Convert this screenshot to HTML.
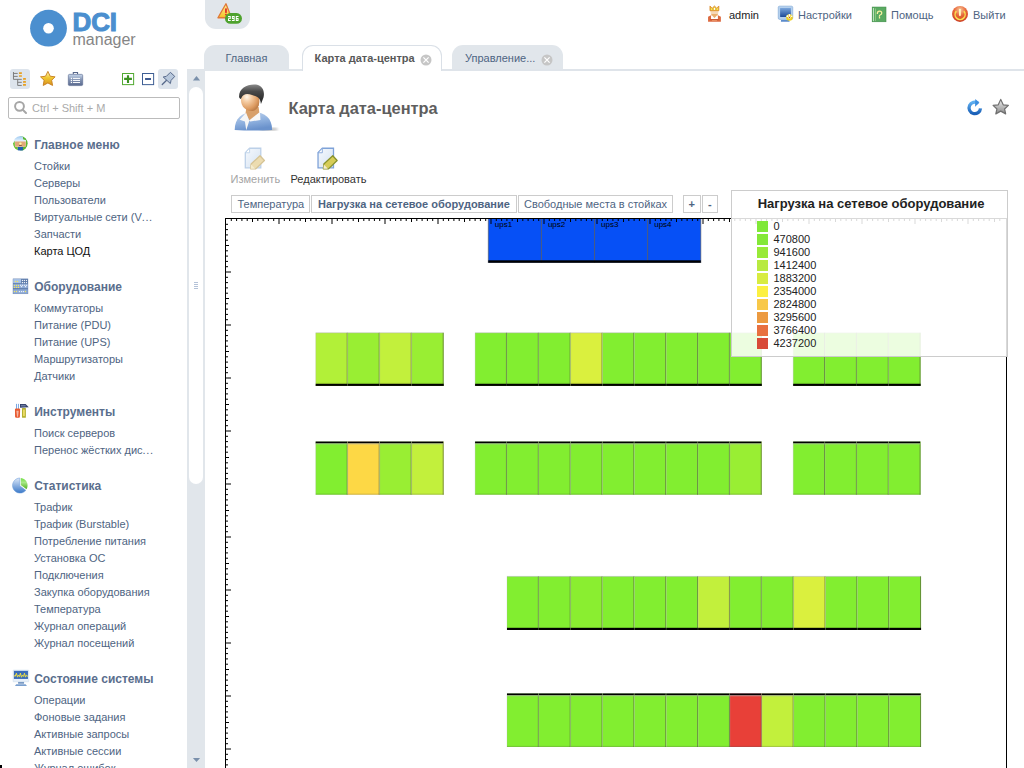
<!DOCTYPE html><html><head><meta charset="utf-8"><style>
*{margin:0;padding:0;box-sizing:border-box}
html,body{width:1024px;height:768px;overflow:hidden;background:#fff;font-family:"Liberation Sans",sans-serif;font-size:11px;color:#333}
.a{position:absolute}
.t{position:absolute;white-space:nowrap}
svg{position:absolute;overflow:visible}
</style></head><body>
<svg style="left:29px;top:9px" width="40" height="40"><circle cx="19.5" cy="19.2" r="18.4" fill="#4b8fcf"/><circle cx="19.5" cy="19.2" r="5.3" fill="#fff"/></svg>
<div class="t" style="left:72.6px;top:5.00px;font-size:26px;line-height:34px;color:#4b8fcf;font-weight:bold;letter-spacing:-0.2px;-webkit-text-stroke:1px #4b8fcf">DCI</div>
<div class="t" style="left:72.5px;top:28.50px;font-size:16px;line-height:21px;color:#858585;font-weight:normal;">manager</div>
<div class="a" style="left:205px;top:0;width:45px;height:29px;background:#e1e6eb;border-radius:0 0 11px 11px"></div>
<div class="t" style="left:729px;top:8.00px;font-size:11px;line-height:14px;color:#222;font-weight:normal;">admin</div>
<div class="t" style="left:798px;top:8.00px;font-size:11px;line-height:14px;color:#4e6482;font-weight:normal;">Настройки</div>
<div class="t" style="left:891px;top:8.00px;font-size:11px;line-height:14px;color:#4e6482;font-weight:normal;">Помощь</div>
<div class="t" style="left:973px;top:8.00px;font-size:11px;line-height:14px;color:#4e6482;font-weight:normal;">Выйти</div>
<div class="a" style="left:204px;top:45px;width:85px;height:26px;background:#e1e6eb;border-radius:11px 11px 0 0"></div>
<div class="t" style="left:225.5px;top:51.00px;font-size:11px;line-height:14px;color:#4e6482;font-weight:normal;">Главная</div>
<div class="a" style="left:302px;top:45px;width:140px;height:26px;background:#fff;border:1px solid #dae0e7;border-bottom:none;border-radius:11px 11px 0 0"></div>
<div class="t" style="left:314.6px;top:51.00px;font-size:11px;line-height:14px;color:#585858;font-weight:bold;">Карта дата-центра</div>
<div class="a" style="left:452px;top:45px;width:111px;height:26px;background:#e1e6eb;border-radius:11px 11px 0 0"></div>
<div class="t" style="left:465px;top:51.00px;font-size:11px;line-height:14px;color:#4e6482;font-weight:normal;">Управление...</div>
<div class="a" style="left:442px;top:69px;width:582px;height:2px;background:#dfe4ea"></div>
<div class="a" style="left:187px;top:69px;width:115px;height:2px;background:#e1e6eb"></div>
<div class="a" style="left:10px;top:69px;width:20px;height:20px;background:#dde4ec;border-radius:3px"></div>
<div class="a" style="left:158px;top:69px;width:20px;height:20px;background:#dde4ec;border-radius:3px"></div>
<div class="a" style="left:8px;top:97px;width:172px;height:22px;border:1px solid #bbb;border-radius:2px"></div>
<div class="t" style="left:32px;top:101.00px;font-size:11px;line-height:14px;color:#aaa;font-weight:normal;">Ctrl + Shift + M</div>
<div class="a" style="left:187px;top:69px;width:18px;height:699px;background:#e1e6eb"></div>
<div class="a" style="left:189px;top:87px;width:14px;height:397px;background:#fff;border-radius:7px"></div>
<div class="t" style="left:34.2px;top:137.00px;font-size:12px;line-height:16px;color:#5a6e8d;font-weight:bold;">Главное меню</div>
<div class="t" style="left:34.0px;top:159.00px;font-size:11px;line-height:14px;color:#4e6482;font-weight:normal;">Стойки</div>
<div class="t" style="left:34.0px;top:176.00px;font-size:11px;line-height:14px;color:#4e6482;font-weight:normal;">Серверы</div>
<div class="t" style="left:34.0px;top:193.00px;font-size:11px;line-height:14px;color:#4e6482;font-weight:normal;">Пользователи</div>
<div class="t" style="left:34.0px;top:210.00px;font-size:11px;line-height:14px;color:#4e6482;font-weight:normal;">Виртуальные сети (V<span style="letter-spacing:0.6px">...</span></div>
<div class="t" style="left:34.0px;top:227.00px;font-size:11px;line-height:14px;color:#4e6482;font-weight:normal;">Запчасти</div>
<div class="t" style="left:34.0px;top:244.00px;font-size:11px;line-height:14px;color:#111;font-weight:normal;">Карта ЦОД</div>
<div class="t" style="left:34.2px;top:279.00px;font-size:12px;line-height:16px;color:#5a6e8d;font-weight:bold;">Оборудование</div>
<div class="t" style="left:34.0px;top:301.00px;font-size:11px;line-height:14px;color:#4e6482;font-weight:normal;">Коммутаторы</div>
<div class="t" style="left:34.0px;top:318.00px;font-size:11px;line-height:14px;color:#4e6482;font-weight:normal;">Питание (PDU)</div>
<div class="t" style="left:34.0px;top:335.00px;font-size:11px;line-height:14px;color:#4e6482;font-weight:normal;">Питание (UPS)</div>
<div class="t" style="left:34.0px;top:352.00px;font-size:11px;line-height:14px;color:#4e6482;font-weight:normal;">Маршрутизаторы</div>
<div class="t" style="left:34.0px;top:369.00px;font-size:11px;line-height:14px;color:#4e6482;font-weight:normal;">Датчики</div>
<div class="t" style="left:34.2px;top:404.00px;font-size:12px;line-height:16px;color:#5a6e8d;font-weight:bold;">Инструменты</div>
<div class="t" style="left:34.0px;top:426.00px;font-size:11px;line-height:14px;color:#4e6482;font-weight:normal;">Поиск серверов</div>
<div class="t" style="left:34.0px;top:443.00px;font-size:11px;line-height:14px;color:#4e6482;font-weight:normal;">Перенос жёстких дис<span style="letter-spacing:0.6px">...</span></div>
<div class="t" style="left:34.2px;top:478.00px;font-size:12px;line-height:16px;color:#5a6e8d;font-weight:bold;">Статистика</div>
<div class="t" style="left:34.0px;top:500.00px;font-size:11px;line-height:14px;color:#4e6482;font-weight:normal;">Трафик</div>
<div class="t" style="left:34.0px;top:517.00px;font-size:11px;line-height:14px;color:#4e6482;font-weight:normal;">Трафик (Burstable)</div>
<div class="t" style="left:34.0px;top:534.00px;font-size:11px;line-height:14px;color:#4e6482;font-weight:normal;">Потребление питания</div>
<div class="t" style="left:34.0px;top:551.00px;font-size:11px;line-height:14px;color:#4e6482;font-weight:normal;">Установка ОС</div>
<div class="t" style="left:34.0px;top:568.00px;font-size:11px;line-height:14px;color:#4e6482;font-weight:normal;">Подключения</div>
<div class="t" style="left:34.0px;top:585.00px;font-size:11px;line-height:14px;color:#4e6482;font-weight:normal;">Закупка оборудования</div>
<div class="t" style="left:34.0px;top:602.00px;font-size:11px;line-height:14px;color:#4e6482;font-weight:normal;">Температура</div>
<div class="t" style="left:34.0px;top:619.00px;font-size:11px;line-height:14px;color:#4e6482;font-weight:normal;">Журнал операций</div>
<div class="t" style="left:34.0px;top:636.00px;font-size:11px;line-height:14px;color:#4e6482;font-weight:normal;">Журнал посещений</div>
<div class="t" style="left:34.2px;top:671.00px;font-size:12px;line-height:16px;color:#5a6e8d;font-weight:bold;">Состояние системы</div>
<div class="t" style="left:34.0px;top:693.00px;font-size:11px;line-height:14px;color:#4e6482;font-weight:normal;">Операции</div>
<div class="t" style="left:34.0px;top:710.00px;font-size:11px;line-height:14px;color:#4e6482;font-weight:normal;">Фоновые задания</div>
<div class="t" style="left:34.0px;top:727.00px;font-size:11px;line-height:14px;color:#4e6482;font-weight:normal;">Активные запросы</div>
<div class="t" style="left:34.0px;top:744.00px;font-size:11px;line-height:14px;color:#4e6482;font-weight:normal;">Активные сессии</div>
<div class="t" style="left:34.0px;top:761.00px;font-size:11px;line-height:14px;color:#4e6482;font-weight:normal;">Журнал ошибок</div>
<div class="t" style="left:288.5px;top:97.90px;font-size:16.4px;line-height:21px;color:#5e5e5e;font-weight:bold;">Карта дата-центра</div>
<div class="t" style="left:230.5px;top:171.50px;font-size:11px;line-height:14px;color:#a4a4a4;font-weight:normal;">Изменить</div>
<div class="t" style="left:290.5px;top:171.50px;font-size:11px;line-height:14px;color:#333;font-weight:normal;">Редактировать</div>
<div class="t" style="left:0px;top:-11.00px;font-size:11px;line-height:14px;color:#4e6482;font-weight:normal;"></div>
<div class="a" style="left:231px;top:195px;width:79px;height:18px;border:1px solid #ccc;background:#fff"></div>
<div class="a" style="left:311px;top:195px;width:206px;height:18px;border:1px solid #ccc;background:#fff"></div>
<div class="a" style="left:518px;top:195px;width:155px;height:18px;border:1px solid #ccc;background:#fff"></div>
<div class="a" style="left:683px;top:195px;width:18px;height:18px;border:1px solid #ccc;background:#fff"></div>
<div class="a" style="left:702px;top:195px;width:16px;height:18px;border:1px solid #ccc;background:#fff"></div>
<div class="t" style="left:237.5px;top:197.00px;font-size:11px;line-height:14px;color:#4e6482;font-weight:normal;">Температура</div>
<div class="t" style="left:318px;top:197.00px;font-size:11px;line-height:14px;color:#4e6482;font-weight:bold;">Нагрузка на сетевое оборудование</div>
<div class="t" style="left:524px;top:197.00px;font-size:11px;line-height:14px;color:#4e6482;font-weight:normal;">Свободные места в стойках</div>
<div class="t" style="left:688.6px;top:197.00px;font-size:11px;line-height:14px;color:#4e6482;font-weight:bold;">+</div>
<div class="t" style="left:708.1px;top:197.00px;font-size:11px;line-height:14px;color:#4e6482;font-weight:bold;">-</div>
<svg style="left:208px;top:0px" width="40" height="30" viewBox="0 0 1024 768">
<defs><linearGradient id="tri" x1="0" y1="0" x2="0" y2="1"><stop offset="0" stop-color="#fff6a0"/><stop offset="1" stop-color="#f4c020"/></linearGradient></defs>
<path d="M460 95 L600 455 L255 455 Z" fill="url(#tri)" stroke="#e07838" stroke-width="34" stroke-linejoin="round"/>
<rect x="438" y="215" width="44" height="115" fill="#e02828"/>
<rect x="438" y="355" width="44" height="40" fill="#e02828"/>
<rect x="435" y="335" width="435" height="275" rx="137" fill="#4ea22e"/>
<g fill="#fff">
<path d="M512 410 h70 v75 h-45 v25 h45 v30 h-70 v-75 h45 v-25 h-45 z"/>
<path d="M612 410 h70 v130 h-70 v-30 h45 v-25 h-45 z M637 435 v25 h20 v-25 z"/>
<path d="M712 410 h70 v25 h-45 v25 h45 v80 h-70 z M737 485 v25 h20 v-25 z"/>
</g></svg>
<svg style="left:704px;top:3px" width="24" height="24" viewBox="0 0 768 768">
<path d="M130 600 L130 440 L225 395 L445 395 L540 440 L540 600 Z" fill="#dc6a40"/>
<rect x="225" y="395" width="220" height="125" fill="#fff"/>
<rect x="200" y="520" width="270" height="26" fill="#c04a28"/>
<rect x="255" y="550" width="160" height="22" fill="#f0a070"/>
<path d="M205 240 L465 240 L450 370 L335 480 L220 370 Z" fill="#f6d8b8"/>
<path d="M225 350 L450 350 L335 480 Z" fill="#eab070"/>
<path d="M190 245 L190 95 L262 165 L335 95 L408 165 L475 95 L475 245 Z" fill="#e8c038" stroke="#d88020" stroke-width="22" stroke-linejoin="round"/>
<ellipse cx="335" cy="190" rx="22" ry="35" fill="#fff"/>
<ellipse cx="240" cy="195" rx="18" ry="30" fill="#f8f060"/>
<ellipse cx="430" cy="195" rx="18" ry="30" fill="#f8f060"/></svg>
<svg style="left:774px;top:3px" width="24" height="24" viewBox="0 0 768 768">
<defs><linearGradient id="scr" x1="0" y1="0" x2="0" y2="1"><stop offset="0" stop-color="#7aa6dc"/><stop offset="1" stop-color="#1e4a98"/></linearGradient></defs>
<rect x="135" y="100" width="465" height="425" rx="45" fill="#b4d0ee" stroke="#7ea6d4" stroke-width="20"/>
<rect x="195" y="160" width="345" height="285" rx="10" fill="url(#scr)"/>
<path d="M225 540 L480 540 L500 600 L220 600 Z" fill="#5a8acb"/>
<g transform="translate(495 465)">
<circle r="105" fill="#f0d020"/>
<g fill="#fff"><circle cx="0" cy="-80" r="30"/><circle cx="-70" cy="-45" r="28"/><circle cx="70" cy="-40" r="26"/></g>
<circle r="38" fill="#f4f4e0"/><circle r="20" fill="#c03020"/>
</g></svg>
<svg style="left:868px;top:3px" width="24" height="24" viewBox="0 0 768 768">
<rect x="135" y="130" width="440" height="470" fill="#5aaa62" stroke="#3c8c44" stroke-width="20"/>
<rect x="165" y="160" width="25" height="420" fill="#d8f0d8"/>
<rect x="225" y="175" width="20" height="400" fill="#a8d890"/>
<path d="M300 330 Q300 260 370 260 Q440 260 440 320 Q440 360 400 375 Q365 390 365 420 M368 465 L368 475" fill="none" stroke="#f8f0a0" stroke-width="40" stroke-linecap="square"/></svg>
<svg style="left:948px;top:3px" width="24" height="24" viewBox="0 0 768 768">
<defs><radialGradient id="pw" cx="0.5" cy="0.25" r="0.8"><stop offset="0" stop-color="#f8c8a0"/><stop offset="0.45" stop-color="#e86838"/><stop offset="1" stop-color="#c83820"/></radialGradient></defs>
<circle cx="385" cy="350" r="255" fill="url(#pw)"/>
<path d="M270 260 A160 160 0 1 0 505 260" fill="none" stroke="#f8e050" stroke-width="48"/>
<rect x="352" y="190" width="60" height="220" fill="#fff8c0"/></svg>
<svg style="left:418.6px;top:52.6px" width="14" height="14" viewBox="-7 -7 14 14"><circle r="5.5" fill="#c6c6c6"/><path d="M-2.6 -2.6 L2.6 2.6 M2.6 -2.6 L-2.6 2.6" stroke="#fff" stroke-width="1.25"/></svg>
<svg style="left:539.6px;top:52.6px" width="14" height="14" viewBox="-7 -7 14 14"><circle r="5.5" fill="#c6c6c6"/><path d="M-2.6 -2.6 L2.6 2.6 M2.6 -2.6 L-2.6 2.6" stroke="#fff" stroke-width="1.25"/></svg>
<svg style="left:8px;top:67px" width="24" height="24" viewBox="0 0 768 768">
<g fill="none" stroke="#777" stroke-width="30">
<path d="M175 160 V395 H440 M175 205 H310 M175 300 H310 M310 395 V590 H440 M310 490 H440"/>
</g>
<g fill="#e8a020"><rect x="350" y="165" width="95" height="55" rx="10"/><rect x="350" y="260" width="95" height="55" rx="10"/>
<rect x="480" y="355" width="95" height="55" rx="10"/><rect x="480" y="450" width="95" height="55" rx="10"/><rect x="480" y="545" width="95" height="55" rx="10"/></g></svg>
<svg style="left:36px;top:67px" width="24" height="24" viewBox="0 0 768 768">
<defs><linearGradient id="st" x1="0" y1="0" x2="0" y2="1"><stop offset="0" stop-color="#fff8c0"/><stop offset="0.45" stop-color="#f0c830"/><stop offset="1" stop-color="#d89020"/></linearGradient></defs>
<path d="M380 140 L455 295 L610 315 L500 425 L530 590 L380 510 L230 590 L260 425 L145 315 L305 295 Z" fill="url(#st)" stroke="#c88020" stroke-width="30" stroke-linejoin="round"/></svg>
<svg style="left:63px;top:67px" width="24" height="24" viewBox="0 0 768 768">
<defs><linearGradient id="bc" x1="0" y1="0" x2="0" y2="1"><stop offset="0" stop-color="#c8d8ec"/><stop offset="0.5" stop-color="#8090b0"/><stop offset="1" stop-color="#5a6a8e"/></linearGradient></defs>
<path d="M330 235 V175 H465 V235" fill="none" stroke="#56668a" stroke-width="35"/>
<rect x="170" y="235" width="460" height="360" rx="40" fill="url(#bc)" stroke="#5a6a8e" stroke-width="20"/>
<g fill="#fff"><rect x="250" y="345" width="40" height="40"/><rect x="250" y="410" width="40" height="40"/><rect x="250" y="475" width="40" height="40"/>
<rect x="320" y="350" width="225" height="30"/><rect x="320" y="415" width="225" height="30"/><rect x="320" y="480" width="225" height="30"/></g></svg>
<svg style="left:116px;top:67px" width="64" height="24" viewBox="0 0 1024 384">
<rect x="104" y="104" width="178" height="178" fill="none" stroke="#52aa32" stroke-width="16"/>
<path d="M130 190 H255 M192 130 V255" stroke="#3c9222" stroke-width="34"/>
<rect x="424" y="104" width="178" height="178" fill="none" stroke="#3e5e94" stroke-width="16"/>
<path d="M465 192 H560" stroke="#34508a" stroke-width="30"/>
<path d="M870 85 L940 150 L880 215 L870 265 L755 160 L805 150 Z" fill="#b8c8dc" stroke="#56688a" stroke-width="16" stroke-linejoin="round"/>
<path d="M805 215 L740 280" stroke="#56688a" stroke-width="20" stroke-linecap="round"/></svg>
<svg style="left:10px;top:98px" width="20" height="20" viewBox="0 0 768 768">
<circle cx="365" cy="320" r="170" fill="none" stroke="#a6a6a6" stroke-width="75"/>
<path d="M500 460 L615 575" stroke="#a6a6a6" stroke-width="75" stroke-linecap="round"/></svg>
<svg style="left:10px;top:133px" width="20" height="20" viewBox="0 0 768 768">
<defs><linearGradient id="gl" x1="0" y1="0" x2="0" y2="1"><stop offset="0" stop-color="#9cc8f0"/><stop offset="0.35" stop-color="#e8f4ff"/><stop offset="1" stop-color="#fff"/></linearGradient></defs>
<clipPath id="gcl"><circle cx="400" cy="400" r="285"/></clipPath><g clip-path="url(#gcl)">
<circle cx="400" cy="400" r="285" fill="url(#gl)"/>
<path d="M400 115 A285 285 0 0 1 685 400 A285 285 0 0 1 400 685 L400 540 L600 520 L620 280 L500 240 L500 150 Z" fill="#5cb830"/>
<path d="M115 400 A285 285 0 0 0 300 665 L300 540 L190 520 L180 300 Z" fill="#6cc030"/>
<rect x="300" y="530" width="200" height="150" fill="#2060b0"/>
<rect x="195" y="325" width="410" height="200" fill="#e0a878"/>
<circle cx="400" cy="405" r="45" fill="#fff8a0"/>
<rect x="345" y="470" width="110" height="25" rx="10" fill="#704830"/></g></svg>
<svg style="left:10px;top:276px" width="20" height="20" viewBox="0 0 768 768">
<rect x="115" y="110" width="575" height="575" fill="#8eaad6" stroke="#5a78a8" stroke-width="14"/>
<rect x="125" y="120" width="300" height="160" fill="#a8c2e6"/>
<g fill="#5a78a8"><rect x="115" y="280" width="575" height="30"/><rect x="115" y="470" width="575" height="40"/><rect x="425" y="120" width="265" height="160"/></g>
<g fill="#f4e860"><circle cx="210" cy="210" r="25"/><circle cx="290" cy="210" r="25"/>
<circle cx="170" cy="360" r="25"/><circle cx="250" cy="360" r="25"/><circle cx="325" cy="360" r="25"/>
<circle cx="170" cy="440" r="25"/><circle cx="250" cy="440" r="25"/><circle cx="325" cy="440" r="25"/>
<circle cx="170" cy="595" r="25"/><circle cx="250" cy="595" r="25"/><circle cx="595" cy="595" r="25"/></g>
<g fill="#eef2f8"><rect x="455" y="150" width="45" height="45"/><rect x="530" y="150" width="45" height="45"/><rect x="610" y="150" width="45" height="45"/>
<rect x="455" y="230" width="45" height="45"/><rect x="530" y="230" width="45" height="45"/><rect x="610" y="230" width="45" height="45"/>
<rect x="385" y="335" width="45" height="45"/><rect x="460" y="335" width="45" height="45"/><rect x="540" y="335" width="45" height="45"/><rect x="615" y="335" width="45" height="45"/>
<rect x="420" y="385" width="45" height="45"/><rect x="575" y="385" width="45" height="45"/>
<rect x="340" y="575" width="45" height="45"/><rect x="420" y="575" width="45" height="45"/><rect x="495" y="575" width="45" height="45"/></g></svg>
<svg style="left:10px;top:401px" width="20" height="20" viewBox="0 0 768 768">
<rect x="230" y="110" width="35" height="195" fill="#6c9ee0"/><rect x="305" y="110" width="35" height="195" fill="#6c9ee0"/>
<path d="M190 320 Q190 290 230 290 L350 290 Q390 290 390 320 L380 600 Q380 640 340 640 L240 640 Q200 640 195 600 Z" fill="#e85a30"/>
<path d="M245 370 L335 370 L310 600 L270 600 Z" fill="#fff" opacity="0.55"/>
<path d="M385 115 L600 115 L720 240 L385 260 Z" fill="#34406a"/>
<rect x="420" y="150" width="180" height="60" fill="#6a7aa0"/>
<rect x="460" y="265" width="150" height="380" rx="20" fill="#b4b030"/>
<rect x="500" y="330" width="70" height="250" fill="#ecdc68"/></svg>
<svg style="left:10px;top:475px" width="20" height="20" viewBox="0 0 768 768">
<defs><linearGradient id="pb" x1="0" y1="0" x2="0" y2="1"><stop offset="0" stop-color="#dce8f8"/><stop offset="1" stop-color="#3a78c8"/></linearGradient>
<linearGradient id="pg" x1="0" y1="0" x2="0" y2="1"><stop offset="0" stop-color="#70e040"/><stop offset="0.4" stop-color="#a8e888"/><stop offset="1" stop-color="#50b020"/></linearGradient></defs>
<path d="M375 115 L375 410 L610 590 A290 290 0 1 1 375 115 Z" fill="url(#pb)" stroke="#6a9ad8" stroke-width="20"/>
<path d="M415 115 A285 285 0 0 1 635 545 L415 380 Z" fill="url(#pg)"/></svg>
<svg style="left:10px;top:668px" width="20" height="20" viewBox="0 0 768 768">
<rect x="120" y="80" width="600" height="450" rx="20" fill="#e8f0fa" stroke="#b8cce4" stroke-width="14"/>
<rect x="150" y="110" width="540" height="310" fill="#3a6cb8"/>
<path d="M150 290 L200 320 L245 200 L290 350 L325 270 L365 330 L400 195 L440 355 L480 275 L520 325 L555 200 L595 350 L630 275 L690 325" fill="none" stroke="#f0e040" stroke-width="38" stroke-linejoin="round"/>
<rect x="310" y="535" width="230" height="70" fill="#7a9ac4"/>
<path d="M190 690 L240 620 L600 620 L650 690 Z" fill="#7aa0d0"/></svg>
<svg style="left:186px;top:72px" width="20" height="14" viewBox="0 0 20 14"><path d="M6.9 8.4 L10.5 4 L14.1 8.4 Z" fill="#7a90ab"/></svg>
<svg style="left:186px;top:754px" width="20" height="14" viewBox="0 0 20 14"><path d="M6.9 4 L14.1 4 L10.5 8 Z" fill="#7a90ab"/></svg>
<svg style="left:186px;top:274px" width="20" height="20" viewBox="0 0 20 20"><g fill="#b4c2d8"><rect x="8" y="8" width="4" height="1"/><rect x="8" y="10" width="4" height="1"/><rect x="8" y="12" width="4" height="1"/><rect x="8" y="14" width="4" height="1"/></g></svg>
<svg style="left:228px;top:80px" width="56" height="56" viewBox="0 0 768 768">
<defs>
<linearGradient id="sh" x1="0" y1="0" x2="0.3" y2="1"><stop offset="0" stop-color="#c4d6ee"/><stop offset="0.6" stop-color="#8eb0de"/><stop offset="1" stop-color="#6a92cc"/></linearGradient>
<radialGradient id="fc" cx="0.32" cy="0.3" r="0.75"><stop offset="0" stop-color="#fff6ea"/><stop offset="0.35" stop-color="#f4caa0"/><stop offset="0.8" stop-color="#dc9a60"/><stop offset="1" stop-color="#c0804a"/></radialGradient>
<linearGradient id="hr" x1="0" y1="0" x2="0" y2="1"><stop offset="0" stop-color="#8a8a8a"/><stop offset="0.35" stop-color="#4a4a4a"/><stop offset="1" stop-color="#1e1e1e"/></linearGradient>
<filter id="bl"><feGaussianBlur stdDeviation="16"/></filter>
</defs>
<ellipse cx="560" cy="675" rx="130" ry="20" fill="#000" opacity="0.3" filter="url(#bl)"/>
<path d="M92 685 C92 530 190 445 345 440 C500 440 605 520 605 685 Q350 700 92 685 Z" fill="url(#sh)"/>
<path d="M250 390 L420 370 L430 450 L300 560 L240 460 Z" fill="#d8a06a"/>
<path d="M160 545 L248 448 L292 560 L250 690 L232 570 Z" fill="#f6f6f6"/>
<path d="M288 556 L438 438 L445 548 L305 568 Z" fill="#f8f8f8"/>
<path d="M178 275 C178 180 240 150 310 150 C400 150 435 210 430 300 C425 380 380 425 320 425 C240 425 178 360 178 275 Z" fill="url(#fc)"/>
<path d="M152 235 C145 110 270 50 385 62 C480 75 505 165 488 235 L452 330 C445 260 425 230 330 205 C270 190 215 175 180 255 L168 260 Z" fill="url(#hr)"/></svg>
<svg style="left:238px;top:142px" width="110" height="30" viewBox="0 0 1024 279"><defs><linearGradient id="dg" x1="0" y1="0" x2="1" y2="1"><stop offset="0" stop-color="#f6f9fd"/><stop offset="1" stop-color="#d4e2f2"/></linearGradient></defs><g transform="translate(0 0)" opacity="1">
<path d="M108 58 H212 V240 H68 V100 Z" fill="url(#dg)" stroke="#bcd0e8" stroke-width="12"/>
<path d="M68 100 L108 58 V100 Z" fill="#fff" stroke="#bcd0e8" stroke-width="8"/>
<path d="M205 128 L246 172 L165 250 L118 250 L122 205 Z" fill="#ecdcb0" stroke="#d6c496" stroke-width="12" stroke-linejoin="round"/>
<path d="M122 210 L118 250 L160 250 Z" fill="#f4ecd0"/>
</g><g transform="translate(677 0)" opacity="1">
<path d="M108 58 H212 V240 H68 V100 Z" fill="url(#dg)" stroke="#7ea2d8" stroke-width="12"/>
<path d="M68 100 L108 58 V100 Z" fill="#fff" stroke="#7ea2d8" stroke-width="8"/>
<path d="M205 128 L246 172 L165 250 L118 250 L122 205 Z" fill="#d6cc58" stroke="#88922c" stroke-width="12" stroke-linejoin="round"/>
<path d="M122 210 L118 250 L160 250 Z" fill="#f4ecd0"/>
</g></svg>
<svg style="left:960px;top:95px" width="56" height="28" viewBox="0 0 1024 512">
<defs><linearGradient id="rf" x1="0" y1="0" x2="0" y2="1"><stop offset="0" stop-color="#60b0f0"/><stop offset="1" stop-color="#1a60b8"/></linearGradient>
<linearGradient id="gs" x1="0" y1="0" x2="0" y2="1"><stop offset="0" stop-color="#f0f0f0"/><stop offset="1" stop-color="#8a8a8a"/></linearGradient></defs>
<path d="M330 150 A105 105 0 1 0 375 245" fill="none" stroke="url(#rf)" stroke-width="60"/>
<path d="M280 75 L355 140 L275 215 Z" fill="#3c8ee0"/>
<path d="M745 80 L790 180 L885 190 L815 255 L835 345 L745 295 L655 345 L675 255 L605 190 L700 180 Z" fill="url(#gs)" stroke="#707070" stroke-width="22" stroke-linejoin="round"/></svg>
<svg style="left:0;top:0" width="1024" height="768" viewBox="0 0 1024 768"><rect x="488.30" y="218.5" width="53.13" height="44" fill="#0650f6" stroke="#555" stroke-opacity="0.6" stroke-width="1"/><text x="494.80" y="227" font-family="Liberation Sans" font-size="8" fill="#000">ups1</text><rect x="541.43" y="218.5" width="53.13" height="44" fill="#0650f6" stroke="#555" stroke-opacity="0.6" stroke-width="1"/><text x="547.93" y="227" font-family="Liberation Sans" font-size="8" fill="#000">ups2</text><rect x="594.56" y="218.5" width="53.13" height="44" fill="#0650f6" stroke="#555" stroke-opacity="0.6" stroke-width="1"/><text x="601.06" y="227" font-family="Liberation Sans" font-size="8" fill="#000">ups3</text><rect x="647.69" y="218.5" width="53.13" height="44" fill="#0650f6" stroke="#555" stroke-opacity="0.6" stroke-width="1"/><text x="654.19" y="227" font-family="Liberation Sans" font-size="8" fill="#000">ups4</text><rect x="488.3" y="260.3" width="212.5" height="2.4" fill="#000"/><rect x="315.70" y="332.80" width="32.00" height="53.10" fill="#b2f038"/><rect x="315.70" y="332.30" width="32.00" height="1" fill="#b0a8c0" fill-opacity="0.45"/><rect x="315.20" y="332.80" width="1" height="53.10" fill="#b0a8c0" fill-opacity="0.25"/><rect x="346.70" y="332.80" width="1" height="53.10" fill="#50503c" fill-opacity="0.6"/><rect x="315.70" y="384.90" width="32.00" height="1" fill="#000" fill-opacity="0.18"/><rect x="315.70" y="382.90" width="32.00" height="1" fill="#000" fill-opacity="0.2"/><rect x="315.70" y="383.90" width="32.00" height="2" fill="#000"/><rect x="347.70" y="332.80" width="32.00" height="53.10" fill="#99ee33"/><rect x="347.70" y="332.30" width="32.00" height="1" fill="#b0a8c0" fill-opacity="0.45"/><rect x="347.20" y="332.80" width="1" height="53.10" fill="#b0a8c0" fill-opacity="0.25"/><rect x="378.70" y="332.80" width="1" height="53.10" fill="#50503c" fill-opacity="0.6"/><rect x="347.70" y="384.90" width="32.00" height="1" fill="#000" fill-opacity="0.18"/><rect x="347.70" y="382.90" width="32.00" height="1" fill="#000" fill-opacity="0.2"/><rect x="347.70" y="383.90" width="32.00" height="2" fill="#000"/><rect x="379.70" y="332.80" width="32.00" height="53.10" fill="#c2f03c"/><rect x="379.70" y="332.30" width="32.00" height="1" fill="#b0a8c0" fill-opacity="0.45"/><rect x="379.20" y="332.80" width="1" height="53.10" fill="#b0a8c0" fill-opacity="0.25"/><rect x="410.70" y="332.80" width="1" height="53.10" fill="#50503c" fill-opacity="0.6"/><rect x="379.70" y="384.90" width="32.00" height="1" fill="#000" fill-opacity="0.18"/><rect x="379.70" y="382.90" width="32.00" height="1" fill="#000" fill-opacity="0.2"/><rect x="379.70" y="383.90" width="32.00" height="2" fill="#000"/><rect x="411.70" y="332.80" width="32.00" height="53.10" fill="#99ee33"/><rect x="411.70" y="332.30" width="32.00" height="1" fill="#b0a8c0" fill-opacity="0.45"/><rect x="411.20" y="332.80" width="1" height="53.10" fill="#b0a8c0" fill-opacity="0.25"/><rect x="442.70" y="332.80" width="1" height="53.10" fill="#50503c" fill-opacity="0.6"/><rect x="411.70" y="384.90" width="32.00" height="1" fill="#000" fill-opacity="0.18"/><rect x="411.70" y="382.90" width="32.00" height="1" fill="#000" fill-opacity="0.2"/><rect x="411.70" y="383.90" width="32.00" height="2" fill="#000"/><rect x="475.10" y="332.80" width="31.85" height="53.10" fill="#82ee30"/><rect x="475.10" y="332.30" width="31.85" height="1" fill="#b0a8c0" fill-opacity="0.45"/><rect x="474.60" y="332.80" width="1" height="53.10" fill="#b0a8c0" fill-opacity="0.25"/><rect x="505.95" y="332.80" width="1" height="53.10" fill="#50503c" fill-opacity="0.6"/><rect x="475.10" y="384.90" width="31.85" height="1" fill="#000" fill-opacity="0.18"/><rect x="475.10" y="382.90" width="31.85" height="1" fill="#000" fill-opacity="0.2"/><rect x="475.10" y="383.90" width="31.85" height="2" fill="#000"/><rect x="506.95" y="332.80" width="31.85" height="53.10" fill="#82ee30"/><rect x="506.95" y="332.30" width="31.85" height="1" fill="#b0a8c0" fill-opacity="0.45"/><rect x="506.45" y="332.80" width="1" height="53.10" fill="#b0a8c0" fill-opacity="0.25"/><rect x="537.80" y="332.80" width="1" height="53.10" fill="#50503c" fill-opacity="0.6"/><rect x="506.95" y="384.90" width="31.85" height="1" fill="#000" fill-opacity="0.18"/><rect x="506.95" y="382.90" width="31.85" height="1" fill="#000" fill-opacity="0.2"/><rect x="506.95" y="383.90" width="31.85" height="2" fill="#000"/><rect x="538.80" y="332.80" width="31.85" height="53.10" fill="#82ee30"/><rect x="538.80" y="332.30" width="31.85" height="1" fill="#b0a8c0" fill-opacity="0.45"/><rect x="538.30" y="332.80" width="1" height="53.10" fill="#b0a8c0" fill-opacity="0.25"/><rect x="569.65" y="332.80" width="1" height="53.10" fill="#50503c" fill-opacity="0.6"/><rect x="538.80" y="384.90" width="31.85" height="1" fill="#000" fill-opacity="0.18"/><rect x="538.80" y="382.90" width="31.85" height="1" fill="#000" fill-opacity="0.2"/><rect x="538.80" y="383.90" width="31.85" height="2" fill="#000"/><rect x="570.65" y="332.80" width="31.85" height="53.10" fill="#daf03e"/><rect x="570.65" y="332.30" width="31.85" height="1" fill="#b0a8c0" fill-opacity="0.45"/><rect x="570.15" y="332.80" width="1" height="53.10" fill="#b0a8c0" fill-opacity="0.25"/><rect x="601.50" y="332.80" width="1" height="53.10" fill="#50503c" fill-opacity="0.6"/><rect x="570.65" y="384.90" width="31.85" height="1" fill="#000" fill-opacity="0.18"/><rect x="570.65" y="382.90" width="31.85" height="1" fill="#000" fill-opacity="0.2"/><rect x="570.65" y="383.90" width="31.85" height="2" fill="#000"/><rect x="602.50" y="332.80" width="31.85" height="53.10" fill="#82ee30"/><rect x="602.50" y="332.30" width="31.85" height="1" fill="#b0a8c0" fill-opacity="0.45"/><rect x="602.00" y="332.80" width="1" height="53.10" fill="#b0a8c0" fill-opacity="0.25"/><rect x="633.35" y="332.80" width="1" height="53.10" fill="#50503c" fill-opacity="0.6"/><rect x="602.50" y="384.90" width="31.85" height="1" fill="#000" fill-opacity="0.18"/><rect x="602.50" y="382.90" width="31.85" height="1" fill="#000" fill-opacity="0.2"/><rect x="602.50" y="383.90" width="31.85" height="2" fill="#000"/><rect x="634.35" y="332.80" width="31.85" height="53.10" fill="#82ee30"/><rect x="634.35" y="332.30" width="31.85" height="1" fill="#b0a8c0" fill-opacity="0.45"/><rect x="633.85" y="332.80" width="1" height="53.10" fill="#b0a8c0" fill-opacity="0.25"/><rect x="665.20" y="332.80" width="1" height="53.10" fill="#50503c" fill-opacity="0.6"/><rect x="634.35" y="384.90" width="31.85" height="1" fill="#000" fill-opacity="0.18"/><rect x="634.35" y="382.90" width="31.85" height="1" fill="#000" fill-opacity="0.2"/><rect x="634.35" y="383.90" width="31.85" height="2" fill="#000"/><rect x="666.20" y="332.80" width="31.85" height="53.10" fill="#82ee30"/><rect x="666.20" y="332.30" width="31.85" height="1" fill="#b0a8c0" fill-opacity="0.45"/><rect x="665.70" y="332.80" width="1" height="53.10" fill="#b0a8c0" fill-opacity="0.25"/><rect x="697.05" y="332.80" width="1" height="53.10" fill="#50503c" fill-opacity="0.6"/><rect x="666.20" y="384.90" width="31.85" height="1" fill="#000" fill-opacity="0.18"/><rect x="666.20" y="382.90" width="31.85" height="1" fill="#000" fill-opacity="0.2"/><rect x="666.20" y="383.90" width="31.85" height="2" fill="#000"/><rect x="698.05" y="332.80" width="31.85" height="53.10" fill="#82ee30"/><rect x="698.05" y="332.30" width="31.85" height="1" fill="#b0a8c0" fill-opacity="0.45"/><rect x="697.55" y="332.80" width="1" height="53.10" fill="#b0a8c0" fill-opacity="0.25"/><rect x="728.90" y="332.80" width="1" height="53.10" fill="#50503c" fill-opacity="0.6"/><rect x="698.05" y="384.90" width="31.85" height="1" fill="#000" fill-opacity="0.18"/><rect x="698.05" y="382.90" width="31.85" height="1" fill="#000" fill-opacity="0.2"/><rect x="698.05" y="383.90" width="31.85" height="2" fill="#000"/><rect x="729.90" y="332.80" width="31.85" height="53.10" fill="#82ee30"/><rect x="729.90" y="332.30" width="31.85" height="1" fill="#b0a8c0" fill-opacity="0.45"/><rect x="729.40" y="332.80" width="1" height="53.10" fill="#b0a8c0" fill-opacity="0.25"/><rect x="760.75" y="332.80" width="1" height="53.10" fill="#50503c" fill-opacity="0.6"/><rect x="729.90" y="384.90" width="31.85" height="1" fill="#000" fill-opacity="0.18"/><rect x="729.90" y="382.90" width="31.85" height="1" fill="#000" fill-opacity="0.2"/><rect x="729.90" y="383.90" width="31.85" height="2" fill="#000"/><rect x="793.20" y="332.80" width="31.85" height="53.10" fill="#82ee30"/><rect x="793.20" y="332.30" width="31.85" height="1" fill="#b0a8c0" fill-opacity="0.45"/><rect x="792.70" y="332.80" width="1" height="53.10" fill="#b0a8c0" fill-opacity="0.25"/><rect x="824.05" y="332.80" width="1" height="53.10" fill="#50503c" fill-opacity="0.6"/><rect x="793.20" y="384.90" width="31.85" height="1" fill="#000" fill-opacity="0.18"/><rect x="793.20" y="382.90" width="31.85" height="1" fill="#000" fill-opacity="0.2"/><rect x="793.20" y="383.90" width="31.85" height="2" fill="#000"/><rect x="825.05" y="332.80" width="31.85" height="53.10" fill="#82ee30"/><rect x="825.05" y="332.30" width="31.85" height="1" fill="#b0a8c0" fill-opacity="0.45"/><rect x="824.55" y="332.80" width="1" height="53.10" fill="#b0a8c0" fill-opacity="0.25"/><rect x="855.90" y="332.80" width="1" height="53.10" fill="#50503c" fill-opacity="0.6"/><rect x="825.05" y="384.90" width="31.85" height="1" fill="#000" fill-opacity="0.18"/><rect x="825.05" y="382.90" width="31.85" height="1" fill="#000" fill-opacity="0.2"/><rect x="825.05" y="383.90" width="31.85" height="2" fill="#000"/><rect x="856.90" y="332.80" width="31.85" height="53.10" fill="#82ee30"/><rect x="856.90" y="332.30" width="31.85" height="1" fill="#b0a8c0" fill-opacity="0.45"/><rect x="856.40" y="332.80" width="1" height="53.10" fill="#b0a8c0" fill-opacity="0.25"/><rect x="887.75" y="332.80" width="1" height="53.10" fill="#50503c" fill-opacity="0.6"/><rect x="856.90" y="384.90" width="31.85" height="1" fill="#000" fill-opacity="0.18"/><rect x="856.90" y="382.90" width="31.85" height="1" fill="#000" fill-opacity="0.2"/><rect x="856.90" y="383.90" width="31.85" height="2" fill="#000"/><rect x="888.75" y="332.80" width="31.85" height="53.10" fill="#82ee30"/><rect x="888.75" y="332.30" width="31.85" height="1" fill="#b0a8c0" fill-opacity="0.45"/><rect x="888.25" y="332.80" width="1" height="53.10" fill="#b0a8c0" fill-opacity="0.25"/><rect x="919.60" y="332.80" width="1" height="53.10" fill="#50503c" fill-opacity="0.6"/><rect x="888.75" y="384.90" width="31.85" height="1" fill="#000" fill-opacity="0.18"/><rect x="888.75" y="382.90" width="31.85" height="1" fill="#000" fill-opacity="0.2"/><rect x="888.75" y="383.90" width="31.85" height="2" fill="#000"/><rect x="315.70" y="441.60" width="32.00" height="53.10" fill="#82ee30"/><rect x="315.70" y="441.10" width="32.00" height="1" fill="#b0a8c0" fill-opacity="0.45"/><rect x="315.20" y="441.60" width="1" height="53.10" fill="#b0a8c0" fill-opacity="0.25"/><rect x="346.70" y="441.60" width="1" height="53.10" fill="#50503c" fill-opacity="0.6"/><rect x="315.70" y="493.70" width="32.00" height="1" fill="#000" fill-opacity="0.18"/><rect x="315.70" y="441.60" width="31.40" height="1.75" fill="#000"/><rect x="315.70" y="443.35" width="32.00" height="1" fill="#b8b8b8" fill-opacity="0.7"/><rect x="347.70" y="441.60" width="32.00" height="53.10" fill="#fdd845"/><rect x="347.70" y="441.10" width="32.00" height="1" fill="#b0a8c0" fill-opacity="0.45"/><rect x="347.20" y="441.60" width="1" height="53.10" fill="#b0a8c0" fill-opacity="0.25"/><rect x="378.70" y="441.60" width="1" height="53.10" fill="#50503c" fill-opacity="0.6"/><rect x="347.70" y="493.70" width="32.00" height="1" fill="#000" fill-opacity="0.18"/><rect x="347.70" y="441.60" width="31.40" height="1.75" fill="#000"/><rect x="347.70" y="443.35" width="32.00" height="1" fill="#b8b8b8" fill-opacity="0.7"/><rect x="379.70" y="441.60" width="32.00" height="53.10" fill="#99ee33"/><rect x="379.70" y="441.10" width="32.00" height="1" fill="#b0a8c0" fill-opacity="0.45"/><rect x="379.20" y="441.60" width="1" height="53.10" fill="#b0a8c0" fill-opacity="0.25"/><rect x="410.70" y="441.60" width="1" height="53.10" fill="#50503c" fill-opacity="0.6"/><rect x="379.70" y="493.70" width="32.00" height="1" fill="#000" fill-opacity="0.18"/><rect x="379.70" y="441.60" width="31.40" height="1.75" fill="#000"/><rect x="379.70" y="443.35" width="32.00" height="1" fill="#b8b8b8" fill-opacity="0.7"/><rect x="411.70" y="441.60" width="32.00" height="53.10" fill="#c2f03c"/><rect x="411.70" y="441.10" width="32.00" height="1" fill="#b0a8c0" fill-opacity="0.45"/><rect x="411.20" y="441.60" width="1" height="53.10" fill="#b0a8c0" fill-opacity="0.25"/><rect x="442.70" y="441.60" width="1" height="53.10" fill="#50503c" fill-opacity="0.6"/><rect x="411.70" y="493.70" width="32.00" height="1" fill="#000" fill-opacity="0.18"/><rect x="411.70" y="441.60" width="31.40" height="1.75" fill="#000"/><rect x="411.70" y="443.35" width="32.00" height="1" fill="#b8b8b8" fill-opacity="0.7"/><rect x="475.10" y="441.60" width="31.85" height="53.10" fill="#82ee30"/><rect x="475.10" y="441.10" width="31.85" height="1" fill="#b0a8c0" fill-opacity="0.45"/><rect x="474.60" y="441.60" width="1" height="53.10" fill="#b0a8c0" fill-opacity="0.25"/><rect x="505.95" y="441.60" width="1" height="53.10" fill="#50503c" fill-opacity="0.6"/><rect x="475.10" y="493.70" width="31.85" height="1" fill="#000" fill-opacity="0.18"/><rect x="475.10" y="441.60" width="31.25" height="1.75" fill="#000"/><rect x="475.10" y="443.35" width="31.85" height="1" fill="#b8b8b8" fill-opacity="0.7"/><rect x="506.95" y="441.60" width="31.85" height="53.10" fill="#82ee30"/><rect x="506.95" y="441.10" width="31.85" height="1" fill="#b0a8c0" fill-opacity="0.45"/><rect x="506.45" y="441.60" width="1" height="53.10" fill="#b0a8c0" fill-opacity="0.25"/><rect x="537.80" y="441.60" width="1" height="53.10" fill="#50503c" fill-opacity="0.6"/><rect x="506.95" y="493.70" width="31.85" height="1" fill="#000" fill-opacity="0.18"/><rect x="506.95" y="441.60" width="31.25" height="1.75" fill="#000"/><rect x="506.95" y="443.35" width="31.85" height="1" fill="#b8b8b8" fill-opacity="0.7"/><rect x="538.80" y="441.60" width="31.85" height="53.10" fill="#82ee30"/><rect x="538.80" y="441.10" width="31.85" height="1" fill="#b0a8c0" fill-opacity="0.45"/><rect x="538.30" y="441.60" width="1" height="53.10" fill="#b0a8c0" fill-opacity="0.25"/><rect x="569.65" y="441.60" width="1" height="53.10" fill="#50503c" fill-opacity="0.6"/><rect x="538.80" y="493.70" width="31.85" height="1" fill="#000" fill-opacity="0.18"/><rect x="538.80" y="441.60" width="31.25" height="1.75" fill="#000"/><rect x="538.80" y="443.35" width="31.85" height="1" fill="#b8b8b8" fill-opacity="0.7"/><rect x="570.65" y="441.60" width="31.85" height="53.10" fill="#82ee30"/><rect x="570.65" y="441.10" width="31.85" height="1" fill="#b0a8c0" fill-opacity="0.45"/><rect x="570.15" y="441.60" width="1" height="53.10" fill="#b0a8c0" fill-opacity="0.25"/><rect x="601.50" y="441.60" width="1" height="53.10" fill="#50503c" fill-opacity="0.6"/><rect x="570.65" y="493.70" width="31.85" height="1" fill="#000" fill-opacity="0.18"/><rect x="570.65" y="441.60" width="31.25" height="1.75" fill="#000"/><rect x="570.65" y="443.35" width="31.85" height="1" fill="#b8b8b8" fill-opacity="0.7"/><rect x="602.50" y="441.60" width="31.85" height="53.10" fill="#82ee30"/><rect x="602.50" y="441.10" width="31.85" height="1" fill="#b0a8c0" fill-opacity="0.45"/><rect x="602.00" y="441.60" width="1" height="53.10" fill="#b0a8c0" fill-opacity="0.25"/><rect x="633.35" y="441.60" width="1" height="53.10" fill="#50503c" fill-opacity="0.6"/><rect x="602.50" y="493.70" width="31.85" height="1" fill="#000" fill-opacity="0.18"/><rect x="602.50" y="441.60" width="31.25" height="1.75" fill="#000"/><rect x="602.50" y="443.35" width="31.85" height="1" fill="#b8b8b8" fill-opacity="0.7"/><rect x="634.35" y="441.60" width="31.85" height="53.10" fill="#82ee30"/><rect x="634.35" y="441.10" width="31.85" height="1" fill="#b0a8c0" fill-opacity="0.45"/><rect x="633.85" y="441.60" width="1" height="53.10" fill="#b0a8c0" fill-opacity="0.25"/><rect x="665.20" y="441.60" width="1" height="53.10" fill="#50503c" fill-opacity="0.6"/><rect x="634.35" y="493.70" width="31.85" height="1" fill="#000" fill-opacity="0.18"/><rect x="634.35" y="441.60" width="31.25" height="1.75" fill="#000"/><rect x="634.35" y="443.35" width="31.85" height="1" fill="#b8b8b8" fill-opacity="0.7"/><rect x="666.20" y="441.60" width="31.85" height="53.10" fill="#82ee30"/><rect x="666.20" y="441.10" width="31.85" height="1" fill="#b0a8c0" fill-opacity="0.45"/><rect x="665.70" y="441.60" width="1" height="53.10" fill="#b0a8c0" fill-opacity="0.25"/><rect x="697.05" y="441.60" width="1" height="53.10" fill="#50503c" fill-opacity="0.6"/><rect x="666.20" y="493.70" width="31.85" height="1" fill="#000" fill-opacity="0.18"/><rect x="666.20" y="441.60" width="31.25" height="1.75" fill="#000"/><rect x="666.20" y="443.35" width="31.85" height="1" fill="#b8b8b8" fill-opacity="0.7"/><rect x="698.05" y="441.60" width="31.85" height="53.10" fill="#82ee30"/><rect x="698.05" y="441.10" width="31.85" height="1" fill="#b0a8c0" fill-opacity="0.45"/><rect x="697.55" y="441.60" width="1" height="53.10" fill="#b0a8c0" fill-opacity="0.25"/><rect x="728.90" y="441.60" width="1" height="53.10" fill="#50503c" fill-opacity="0.6"/><rect x="698.05" y="493.70" width="31.85" height="1" fill="#000" fill-opacity="0.18"/><rect x="698.05" y="441.60" width="31.25" height="1.75" fill="#000"/><rect x="698.05" y="443.35" width="31.85" height="1" fill="#b8b8b8" fill-opacity="0.7"/><rect x="729.90" y="441.60" width="31.85" height="53.10" fill="#99ee33"/><rect x="729.90" y="441.10" width="31.85" height="1" fill="#b0a8c0" fill-opacity="0.45"/><rect x="729.40" y="441.60" width="1" height="53.10" fill="#b0a8c0" fill-opacity="0.25"/><rect x="760.75" y="441.60" width="1" height="53.10" fill="#50503c" fill-opacity="0.6"/><rect x="729.90" y="493.70" width="31.85" height="1" fill="#000" fill-opacity="0.18"/><rect x="729.90" y="441.60" width="31.25" height="1.75" fill="#000"/><rect x="729.90" y="443.35" width="31.85" height="1" fill="#b8b8b8" fill-opacity="0.7"/><rect x="793.20" y="441.60" width="31.85" height="53.10" fill="#82ee30"/><rect x="793.20" y="441.10" width="31.85" height="1" fill="#b0a8c0" fill-opacity="0.45"/><rect x="792.70" y="441.60" width="1" height="53.10" fill="#b0a8c0" fill-opacity="0.25"/><rect x="824.05" y="441.60" width="1" height="53.10" fill="#50503c" fill-opacity="0.6"/><rect x="793.20" y="493.70" width="31.85" height="1" fill="#000" fill-opacity="0.18"/><rect x="793.20" y="441.60" width="31.25" height="1.75" fill="#000"/><rect x="793.20" y="443.35" width="31.85" height="1" fill="#b8b8b8" fill-opacity="0.7"/><rect x="825.05" y="441.60" width="31.85" height="53.10" fill="#82ee30"/><rect x="825.05" y="441.10" width="31.85" height="1" fill="#b0a8c0" fill-opacity="0.45"/><rect x="824.55" y="441.60" width="1" height="53.10" fill="#b0a8c0" fill-opacity="0.25"/><rect x="855.90" y="441.60" width="1" height="53.10" fill="#50503c" fill-opacity="0.6"/><rect x="825.05" y="493.70" width="31.85" height="1" fill="#000" fill-opacity="0.18"/><rect x="825.05" y="441.60" width="31.25" height="1.75" fill="#000"/><rect x="825.05" y="443.35" width="31.85" height="1" fill="#b8b8b8" fill-opacity="0.7"/><rect x="856.90" y="441.60" width="31.85" height="53.10" fill="#82ee30"/><rect x="856.90" y="441.10" width="31.85" height="1" fill="#b0a8c0" fill-opacity="0.45"/><rect x="856.40" y="441.60" width="1" height="53.10" fill="#b0a8c0" fill-opacity="0.25"/><rect x="887.75" y="441.60" width="1" height="53.10" fill="#50503c" fill-opacity="0.6"/><rect x="856.90" y="493.70" width="31.85" height="1" fill="#000" fill-opacity="0.18"/><rect x="856.90" y="441.60" width="31.25" height="1.75" fill="#000"/><rect x="856.90" y="443.35" width="31.85" height="1" fill="#b8b8b8" fill-opacity="0.7"/><rect x="888.75" y="441.60" width="31.85" height="53.10" fill="#82ee30"/><rect x="888.75" y="441.10" width="31.85" height="1" fill="#b0a8c0" fill-opacity="0.45"/><rect x="888.25" y="441.60" width="1" height="53.10" fill="#b0a8c0" fill-opacity="0.25"/><rect x="919.60" y="441.60" width="1" height="53.10" fill="#50503c" fill-opacity="0.6"/><rect x="888.75" y="493.70" width="31.85" height="1" fill="#000" fill-opacity="0.18"/><rect x="888.75" y="441.60" width="31.25" height="1.75" fill="#000"/><rect x="888.75" y="443.35" width="31.85" height="1" fill="#b8b8b8" fill-opacity="0.7"/><rect x="507.00" y="576.40" width="31.85" height="53.60" fill="#82ee30"/><rect x="507.00" y="575.90" width="31.85" height="1" fill="#b0a8c0" fill-opacity="0.45"/><rect x="506.50" y="576.40" width="1" height="53.60" fill="#b0a8c0" fill-opacity="0.25"/><rect x="537.85" y="576.40" width="1" height="53.60" fill="#50503c" fill-opacity="0.6"/><rect x="507.00" y="629.00" width="31.85" height="1" fill="#000" fill-opacity="0.18"/><rect x="507.00" y="627.00" width="31.85" height="1" fill="#000" fill-opacity="0.2"/><rect x="507.00" y="628.00" width="31.85" height="2" fill="#000"/><rect x="538.85" y="576.40" width="31.85" height="53.60" fill="#82ee30"/><rect x="538.85" y="575.90" width="31.85" height="1" fill="#b0a8c0" fill-opacity="0.45"/><rect x="538.35" y="576.40" width="1" height="53.60" fill="#b0a8c0" fill-opacity="0.25"/><rect x="569.70" y="576.40" width="1" height="53.60" fill="#50503c" fill-opacity="0.6"/><rect x="538.85" y="629.00" width="31.85" height="1" fill="#000" fill-opacity="0.18"/><rect x="538.85" y="627.00" width="31.85" height="1" fill="#000" fill-opacity="0.2"/><rect x="538.85" y="628.00" width="31.85" height="2" fill="#000"/><rect x="570.70" y="576.40" width="31.85" height="53.60" fill="#8aee30"/><rect x="570.70" y="575.90" width="31.85" height="1" fill="#b0a8c0" fill-opacity="0.45"/><rect x="570.20" y="576.40" width="1" height="53.60" fill="#b0a8c0" fill-opacity="0.25"/><rect x="601.55" y="576.40" width="1" height="53.60" fill="#50503c" fill-opacity="0.6"/><rect x="570.70" y="629.00" width="31.85" height="1" fill="#000" fill-opacity="0.18"/><rect x="570.70" y="627.00" width="31.85" height="1" fill="#000" fill-opacity="0.2"/><rect x="570.70" y="628.00" width="31.85" height="2" fill="#000"/><rect x="602.55" y="576.40" width="31.85" height="53.60" fill="#82ee30"/><rect x="602.55" y="575.90" width="31.85" height="1" fill="#b0a8c0" fill-opacity="0.45"/><rect x="602.05" y="576.40" width="1" height="53.60" fill="#b0a8c0" fill-opacity="0.25"/><rect x="633.40" y="576.40" width="1" height="53.60" fill="#50503c" fill-opacity="0.6"/><rect x="602.55" y="629.00" width="31.85" height="1" fill="#000" fill-opacity="0.18"/><rect x="602.55" y="627.00" width="31.85" height="1" fill="#000" fill-opacity="0.2"/><rect x="602.55" y="628.00" width="31.85" height="2" fill="#000"/><rect x="634.40" y="576.40" width="31.85" height="53.60" fill="#82ee30"/><rect x="634.40" y="575.90" width="31.85" height="1" fill="#b0a8c0" fill-opacity="0.45"/><rect x="633.90" y="576.40" width="1" height="53.60" fill="#b0a8c0" fill-opacity="0.25"/><rect x="665.25" y="576.40" width="1" height="53.60" fill="#50503c" fill-opacity="0.6"/><rect x="634.40" y="629.00" width="31.85" height="1" fill="#000" fill-opacity="0.18"/><rect x="634.40" y="627.00" width="31.85" height="1" fill="#000" fill-opacity="0.2"/><rect x="634.40" y="628.00" width="31.85" height="2" fill="#000"/><rect x="666.25" y="576.40" width="31.85" height="53.60" fill="#82ee30"/><rect x="666.25" y="575.90" width="31.85" height="1" fill="#b0a8c0" fill-opacity="0.45"/><rect x="665.75" y="576.40" width="1" height="53.60" fill="#b0a8c0" fill-opacity="0.25"/><rect x="697.10" y="576.40" width="1" height="53.60" fill="#50503c" fill-opacity="0.6"/><rect x="666.25" y="629.00" width="31.85" height="1" fill="#000" fill-opacity="0.18"/><rect x="666.25" y="627.00" width="31.85" height="1" fill="#000" fill-opacity="0.2"/><rect x="666.25" y="628.00" width="31.85" height="2" fill="#000"/><rect x="698.10" y="576.40" width="31.85" height="53.60" fill="#c2f03c"/><rect x="698.10" y="575.90" width="31.85" height="1" fill="#b0a8c0" fill-opacity="0.45"/><rect x="697.60" y="576.40" width="1" height="53.60" fill="#b0a8c0" fill-opacity="0.25"/><rect x="728.95" y="576.40" width="1" height="53.60" fill="#50503c" fill-opacity="0.6"/><rect x="698.10" y="629.00" width="31.85" height="1" fill="#000" fill-opacity="0.18"/><rect x="698.10" y="627.00" width="31.85" height="1" fill="#000" fill-opacity="0.2"/><rect x="698.10" y="628.00" width="31.85" height="2" fill="#000"/><rect x="729.95" y="576.40" width="31.85" height="53.60" fill="#82ee30"/><rect x="729.95" y="575.90" width="31.85" height="1" fill="#b0a8c0" fill-opacity="0.45"/><rect x="729.45" y="576.40" width="1" height="53.60" fill="#b0a8c0" fill-opacity="0.25"/><rect x="760.80" y="576.40" width="1" height="53.60" fill="#50503c" fill-opacity="0.6"/><rect x="729.95" y="629.00" width="31.85" height="1" fill="#000" fill-opacity="0.18"/><rect x="729.95" y="627.00" width="31.85" height="1" fill="#000" fill-opacity="0.2"/><rect x="729.95" y="628.00" width="31.85" height="2" fill="#000"/><rect x="761.80" y="576.40" width="31.85" height="53.60" fill="#82ee30"/><rect x="761.80" y="575.90" width="31.85" height="1" fill="#b0a8c0" fill-opacity="0.45"/><rect x="761.30" y="576.40" width="1" height="53.60" fill="#b0a8c0" fill-opacity="0.25"/><rect x="792.65" y="576.40" width="1" height="53.60" fill="#50503c" fill-opacity="0.6"/><rect x="761.80" y="629.00" width="31.85" height="1" fill="#000" fill-opacity="0.18"/><rect x="761.80" y="627.00" width="31.85" height="1" fill="#000" fill-opacity="0.2"/><rect x="761.80" y="628.00" width="31.85" height="2" fill="#000"/><rect x="793.65" y="576.40" width="31.85" height="53.60" fill="#daf03e"/><rect x="793.65" y="575.90" width="31.85" height="1" fill="#b0a8c0" fill-opacity="0.45"/><rect x="793.15" y="576.40" width="1" height="53.60" fill="#b0a8c0" fill-opacity="0.25"/><rect x="824.50" y="576.40" width="1" height="53.60" fill="#50503c" fill-opacity="0.6"/><rect x="793.65" y="629.00" width="31.85" height="1" fill="#000" fill-opacity="0.18"/><rect x="793.65" y="627.00" width="31.85" height="1" fill="#000" fill-opacity="0.2"/><rect x="793.65" y="628.00" width="31.85" height="2" fill="#000"/><rect x="825.50" y="576.40" width="31.85" height="53.60" fill="#82ee30"/><rect x="825.50" y="575.90" width="31.85" height="1" fill="#b0a8c0" fill-opacity="0.45"/><rect x="825.00" y="576.40" width="1" height="53.60" fill="#b0a8c0" fill-opacity="0.25"/><rect x="856.35" y="576.40" width="1" height="53.60" fill="#50503c" fill-opacity="0.6"/><rect x="825.50" y="629.00" width="31.85" height="1" fill="#000" fill-opacity="0.18"/><rect x="825.50" y="627.00" width="31.85" height="1" fill="#000" fill-opacity="0.2"/><rect x="825.50" y="628.00" width="31.85" height="2" fill="#000"/><rect x="857.35" y="576.40" width="31.85" height="53.60" fill="#82ee30"/><rect x="857.35" y="575.90" width="31.85" height="1" fill="#b0a8c0" fill-opacity="0.45"/><rect x="856.85" y="576.40" width="1" height="53.60" fill="#b0a8c0" fill-opacity="0.25"/><rect x="888.20" y="576.40" width="1" height="53.60" fill="#50503c" fill-opacity="0.6"/><rect x="857.35" y="629.00" width="31.85" height="1" fill="#000" fill-opacity="0.18"/><rect x="857.35" y="627.00" width="31.85" height="1" fill="#000" fill-opacity="0.2"/><rect x="857.35" y="628.00" width="31.85" height="2" fill="#000"/><rect x="889.20" y="576.40" width="31.85" height="53.60" fill="#82ee30"/><rect x="889.20" y="575.90" width="31.85" height="1" fill="#b0a8c0" fill-opacity="0.45"/><rect x="888.70" y="576.40" width="1" height="53.60" fill="#b0a8c0" fill-opacity="0.25"/><rect x="920.05" y="576.40" width="1" height="53.60" fill="#50503c" fill-opacity="0.6"/><rect x="889.20" y="629.00" width="31.85" height="1" fill="#000" fill-opacity="0.18"/><rect x="889.20" y="627.00" width="31.85" height="1" fill="#000" fill-opacity="0.2"/><rect x="889.20" y="628.00" width="31.85" height="2" fill="#000"/><rect x="507.00" y="693.50" width="31.85" height="53.40" fill="#82ee30"/><rect x="507.00" y="693.00" width="31.85" height="1" fill="#b0a8c0" fill-opacity="0.45"/><rect x="506.50" y="693.50" width="1" height="53.40" fill="#b0a8c0" fill-opacity="0.25"/><rect x="537.85" y="693.50" width="1" height="53.40" fill="#50503c" fill-opacity="0.6"/><rect x="507.00" y="745.90" width="31.85" height="1" fill="#000" fill-opacity="0.18"/><rect x="507.00" y="693.50" width="31.25" height="1.75" fill="#000"/><rect x="507.00" y="695.25" width="31.85" height="1" fill="#b8b8b8" fill-opacity="0.7"/><rect x="538.85" y="693.50" width="31.85" height="53.40" fill="#82ee30"/><rect x="538.85" y="693.00" width="31.85" height="1" fill="#b0a8c0" fill-opacity="0.45"/><rect x="538.35" y="693.50" width="1" height="53.40" fill="#b0a8c0" fill-opacity="0.25"/><rect x="569.70" y="693.50" width="1" height="53.40" fill="#50503c" fill-opacity="0.6"/><rect x="538.85" y="745.90" width="31.85" height="1" fill="#000" fill-opacity="0.18"/><rect x="538.85" y="693.50" width="31.25" height="1.75" fill="#000"/><rect x="538.85" y="695.25" width="31.85" height="1" fill="#b8b8b8" fill-opacity="0.7"/><rect x="570.70" y="693.50" width="31.85" height="53.40" fill="#82ee30"/><rect x="570.70" y="693.00" width="31.85" height="1" fill="#b0a8c0" fill-opacity="0.45"/><rect x="570.20" y="693.50" width="1" height="53.40" fill="#b0a8c0" fill-opacity="0.25"/><rect x="601.55" y="693.50" width="1" height="53.40" fill="#50503c" fill-opacity="0.6"/><rect x="570.70" y="745.90" width="31.85" height="1" fill="#000" fill-opacity="0.18"/><rect x="570.70" y="693.50" width="31.25" height="1.75" fill="#000"/><rect x="570.70" y="695.25" width="31.85" height="1" fill="#b8b8b8" fill-opacity="0.7"/><rect x="602.55" y="693.50" width="31.85" height="53.40" fill="#82ee30"/><rect x="602.55" y="693.00" width="31.85" height="1" fill="#b0a8c0" fill-opacity="0.45"/><rect x="602.05" y="693.50" width="1" height="53.40" fill="#b0a8c0" fill-opacity="0.25"/><rect x="633.40" y="693.50" width="1" height="53.40" fill="#50503c" fill-opacity="0.6"/><rect x="602.55" y="745.90" width="31.85" height="1" fill="#000" fill-opacity="0.18"/><rect x="602.55" y="693.50" width="31.25" height="1.75" fill="#000"/><rect x="602.55" y="695.25" width="31.85" height="1" fill="#b8b8b8" fill-opacity="0.7"/><rect x="634.40" y="693.50" width="31.85" height="53.40" fill="#82ee30"/><rect x="634.40" y="693.00" width="31.85" height="1" fill="#b0a8c0" fill-opacity="0.45"/><rect x="633.90" y="693.50" width="1" height="53.40" fill="#b0a8c0" fill-opacity="0.25"/><rect x="665.25" y="693.50" width="1" height="53.40" fill="#50503c" fill-opacity="0.6"/><rect x="634.40" y="745.90" width="31.85" height="1" fill="#000" fill-opacity="0.18"/><rect x="634.40" y="693.50" width="31.25" height="1.75" fill="#000"/><rect x="634.40" y="695.25" width="31.85" height="1" fill="#b8b8b8" fill-opacity="0.7"/><rect x="666.25" y="693.50" width="31.85" height="53.40" fill="#82ee30"/><rect x="666.25" y="693.00" width="31.85" height="1" fill="#b0a8c0" fill-opacity="0.45"/><rect x="665.75" y="693.50" width="1" height="53.40" fill="#b0a8c0" fill-opacity="0.25"/><rect x="697.10" y="693.50" width="1" height="53.40" fill="#50503c" fill-opacity="0.6"/><rect x="666.25" y="745.90" width="31.85" height="1" fill="#000" fill-opacity="0.18"/><rect x="666.25" y="693.50" width="31.25" height="1.75" fill="#000"/><rect x="666.25" y="695.25" width="31.85" height="1" fill="#b8b8b8" fill-opacity="0.7"/><rect x="698.10" y="693.50" width="31.85" height="53.40" fill="#82ee30"/><rect x="698.10" y="693.00" width="31.85" height="1" fill="#b0a8c0" fill-opacity="0.45"/><rect x="697.60" y="693.50" width="1" height="53.40" fill="#b0a8c0" fill-opacity="0.25"/><rect x="728.95" y="693.50" width="1" height="53.40" fill="#50503c" fill-opacity="0.6"/><rect x="698.10" y="745.90" width="31.85" height="1" fill="#000" fill-opacity="0.18"/><rect x="698.10" y="693.50" width="31.25" height="1.75" fill="#000"/><rect x="698.10" y="695.25" width="31.85" height="1" fill="#b8b8b8" fill-opacity="0.7"/><rect x="729.95" y="693.50" width="31.85" height="53.40" fill="#e84038"/><rect x="729.95" y="693.00" width="31.85" height="1" fill="#b0a8c0" fill-opacity="0.45"/><rect x="729.45" y="693.50" width="1" height="53.40" fill="#b0a8c0" fill-opacity="0.25"/><rect x="760.80" y="693.50" width="1" height="53.40" fill="#50503c" fill-opacity="0.6"/><rect x="729.95" y="745.90" width="31.85" height="1" fill="#000" fill-opacity="0.18"/><rect x="729.95" y="693.50" width="31.25" height="1.75" fill="#000"/><rect x="729.95" y="695.25" width="31.85" height="1" fill="#b8b8b8" fill-opacity="0.7"/><rect x="761.80" y="693.50" width="31.85" height="53.40" fill="#c2f03c"/><rect x="761.80" y="693.00" width="31.85" height="1" fill="#b0a8c0" fill-opacity="0.45"/><rect x="761.30" y="693.50" width="1" height="53.40" fill="#b0a8c0" fill-opacity="0.25"/><rect x="792.65" y="693.50" width="1" height="53.40" fill="#50503c" fill-opacity="0.6"/><rect x="761.80" y="745.90" width="31.85" height="1" fill="#000" fill-opacity="0.18"/><rect x="761.80" y="693.50" width="31.25" height="1.75" fill="#000"/><rect x="761.80" y="695.25" width="31.85" height="1" fill="#b8b8b8" fill-opacity="0.7"/><rect x="793.65" y="693.50" width="31.85" height="53.40" fill="#82ee30"/><rect x="793.65" y="693.00" width="31.85" height="1" fill="#b0a8c0" fill-opacity="0.45"/><rect x="793.15" y="693.50" width="1" height="53.40" fill="#b0a8c0" fill-opacity="0.25"/><rect x="824.50" y="693.50" width="1" height="53.40" fill="#50503c" fill-opacity="0.6"/><rect x="793.65" y="745.90" width="31.85" height="1" fill="#000" fill-opacity="0.18"/><rect x="793.65" y="693.50" width="31.25" height="1.75" fill="#000"/><rect x="793.65" y="695.25" width="31.85" height="1" fill="#b8b8b8" fill-opacity="0.7"/><rect x="825.50" y="693.50" width="31.85" height="53.40" fill="#82ee30"/><rect x="825.50" y="693.00" width="31.85" height="1" fill="#b0a8c0" fill-opacity="0.45"/><rect x="825.00" y="693.50" width="1" height="53.40" fill="#b0a8c0" fill-opacity="0.25"/><rect x="856.35" y="693.50" width="1" height="53.40" fill="#50503c" fill-opacity="0.6"/><rect x="825.50" y="745.90" width="31.85" height="1" fill="#000" fill-opacity="0.18"/><rect x="825.50" y="693.50" width="31.25" height="1.75" fill="#000"/><rect x="825.50" y="695.25" width="31.85" height="1" fill="#b8b8b8" fill-opacity="0.7"/><rect x="857.35" y="693.50" width="31.85" height="53.40" fill="#82ee30"/><rect x="857.35" y="693.00" width="31.85" height="1" fill="#b0a8c0" fill-opacity="0.45"/><rect x="856.85" y="693.50" width="1" height="53.40" fill="#b0a8c0" fill-opacity="0.25"/><rect x="888.20" y="693.50" width="1" height="53.40" fill="#50503c" fill-opacity="0.6"/><rect x="857.35" y="745.90" width="31.85" height="1" fill="#000" fill-opacity="0.18"/><rect x="857.35" y="693.50" width="31.25" height="1.75" fill="#000"/><rect x="857.35" y="695.25" width="31.85" height="1" fill="#b8b8b8" fill-opacity="0.7"/><rect x="889.20" y="693.50" width="31.85" height="53.40" fill="#82ee30"/><rect x="889.20" y="693.00" width="31.85" height="1" fill="#b0a8c0" fill-opacity="0.45"/><rect x="888.70" y="693.50" width="1" height="53.40" fill="#b0a8c0" fill-opacity="0.25"/><rect x="920.05" y="693.50" width="1" height="53.40" fill="#50503c" fill-opacity="0.6"/><rect x="889.20" y="745.90" width="31.85" height="1" fill="#000" fill-opacity="0.18"/><rect x="889.20" y="693.50" width="31.25" height="1.75" fill="#000"/><rect x="889.20" y="695.25" width="31.85" height="1" fill="#b8b8b8" fill-opacity="0.7"/><rect x="225" y="218" width="782" height="1" fill="#000"/><rect x="225" y="218" width="1" height="560" fill="#000"/><rect x="1006" y="218" width="1" height="560" fill="#000"/><rect x="230.80" y="219" width="1" height="2" fill="#000"/><rect x="236.10" y="219" width="1" height="2" fill="#000"/><rect x="241.40" y="219" width="1" height="2" fill="#000"/><rect x="246.70" y="219" width="1" height="2" fill="#000"/><rect x="252.00" y="219" width="1" height="3" fill="#000"/><rect x="257.30" y="219" width="1" height="2" fill="#000"/><rect x="262.60" y="219" width="1" height="2" fill="#000"/><rect x="267.90" y="219" width="1" height="2" fill="#000"/><rect x="273.20" y="219" width="1" height="2" fill="#000"/><rect x="278.50" y="219" width="1" height="5" fill="#000"/><rect x="283.80" y="219" width="1" height="2" fill="#000"/><rect x="289.10" y="219" width="1" height="2" fill="#000"/><rect x="294.40" y="219" width="1" height="2" fill="#000"/><rect x="299.70" y="219" width="1" height="2" fill="#000"/><rect x="305.00" y="219" width="1" height="3" fill="#000"/><rect x="310.30" y="219" width="1" height="2" fill="#000"/><rect x="315.60" y="219" width="1" height="2" fill="#000"/><rect x="320.90" y="219" width="1" height="2" fill="#000"/><rect x="326.20" y="219" width="1" height="2" fill="#000"/><rect x="331.50" y="219" width="1" height="5" fill="#000"/><rect x="336.80" y="219" width="1" height="2" fill="#000"/><rect x="342.10" y="219" width="1" height="2" fill="#000"/><rect x="347.40" y="219" width="1" height="2" fill="#000"/><rect x="352.70" y="219" width="1" height="2" fill="#000"/><rect x="358.00" y="219" width="1" height="3" fill="#000"/><rect x="363.30" y="219" width="1" height="2" fill="#000"/><rect x="368.60" y="219" width="1" height="2" fill="#000"/><rect x="373.90" y="219" width="1" height="2" fill="#000"/><rect x="379.20" y="219" width="1" height="2" fill="#000"/><rect x="384.50" y="219" width="1" height="5" fill="#000"/><rect x="389.80" y="219" width="1" height="2" fill="#000"/><rect x="395.10" y="219" width="1" height="2" fill="#000"/><rect x="400.40" y="219" width="1" height="2" fill="#000"/><rect x="405.70" y="219" width="1" height="2" fill="#000"/><rect x="411.00" y="219" width="1" height="3" fill="#000"/><rect x="416.30" y="219" width="1" height="2" fill="#000"/><rect x="421.60" y="219" width="1" height="2" fill="#000"/><rect x="426.90" y="219" width="1" height="2" fill="#000"/><rect x="432.20" y="219" width="1" height="2" fill="#000"/><rect x="437.50" y="219" width="1" height="5" fill="#000"/><rect x="442.80" y="219" width="1" height="2" fill="#000"/><rect x="448.10" y="219" width="1" height="2" fill="#000"/><rect x="453.40" y="219" width="1" height="2" fill="#000"/><rect x="458.70" y="219" width="1" height="2" fill="#000"/><rect x="464.00" y="219" width="1" height="3" fill="#000"/><rect x="469.30" y="219" width="1" height="2" fill="#000"/><rect x="474.60" y="219" width="1" height="2" fill="#000"/><rect x="479.90" y="219" width="1" height="2" fill="#000"/><rect x="485.20" y="219" width="1" height="2" fill="#000"/><rect x="490.50" y="219" width="1" height="5" fill="#000"/><rect x="495.80" y="219" width="1" height="2" fill="#000"/><rect x="501.10" y="219" width="1" height="2" fill="#000"/><rect x="506.40" y="219" width="1" height="2" fill="#000"/><rect x="511.70" y="219" width="1" height="2" fill="#000"/><rect x="517.00" y="219" width="1" height="3" fill="#000"/><rect x="522.30" y="219" width="1" height="2" fill="#000"/><rect x="527.60" y="219" width="1" height="2" fill="#000"/><rect x="532.90" y="219" width="1" height="2" fill="#000"/><rect x="538.20" y="219" width="1" height="2" fill="#000"/><rect x="543.50" y="219" width="1" height="5" fill="#000"/><rect x="548.80" y="219" width="1" height="2" fill="#000"/><rect x="554.10" y="219" width="1" height="2" fill="#000"/><rect x="559.40" y="219" width="1" height="2" fill="#000"/><rect x="564.70" y="219" width="1" height="2" fill="#000"/><rect x="570.00" y="219" width="1" height="3" fill="#000"/><rect x="575.30" y="219" width="1" height="2" fill="#000"/><rect x="580.60" y="219" width="1" height="2" fill="#000"/><rect x="585.90" y="219" width="1" height="2" fill="#000"/><rect x="591.20" y="219" width="1" height="2" fill="#000"/><rect x="596.50" y="219" width="1" height="5" fill="#000"/><rect x="601.80" y="219" width="1" height="2" fill="#000"/><rect x="607.10" y="219" width="1" height="2" fill="#000"/><rect x="612.40" y="219" width="1" height="2" fill="#000"/><rect x="617.70" y="219" width="1" height="2" fill="#000"/><rect x="623.00" y="219" width="1" height="3" fill="#000"/><rect x="628.30" y="219" width="1" height="2" fill="#000"/><rect x="633.60" y="219" width="1" height="2" fill="#000"/><rect x="638.90" y="219" width="1" height="2" fill="#000"/><rect x="644.20" y="219" width="1" height="2" fill="#000"/><rect x="649.50" y="219" width="1" height="5" fill="#000"/><rect x="654.80" y="219" width="1" height="2" fill="#000"/><rect x="660.10" y="219" width="1" height="2" fill="#000"/><rect x="665.40" y="219" width="1" height="2" fill="#000"/><rect x="670.70" y="219" width="1" height="2" fill="#000"/><rect x="676.00" y="219" width="1" height="3" fill="#000"/><rect x="681.30" y="219" width="1" height="2" fill="#000"/><rect x="686.60" y="219" width="1" height="2" fill="#000"/><rect x="691.90" y="219" width="1" height="2" fill="#000"/><rect x="697.20" y="219" width="1" height="2" fill="#000"/><rect x="702.50" y="219" width="1" height="5" fill="#000"/><rect x="707.80" y="219" width="1" height="2" fill="#000"/><rect x="713.10" y="219" width="1" height="2" fill="#000"/><rect x="718.40" y="219" width="1" height="2" fill="#000"/><rect x="723.70" y="219" width="1" height="2" fill="#000"/><rect x="729.00" y="219" width="1" height="3" fill="#000"/><rect x="734.30" y="219" width="1" height="2" fill="#000"/><rect x="739.60" y="219" width="1" height="2" fill="#000"/><rect x="744.90" y="219" width="1" height="2" fill="#000"/><rect x="750.20" y="219" width="1" height="2" fill="#000"/><rect x="755.50" y="219" width="1" height="5" fill="#000"/><rect x="760.80" y="219" width="1" height="2" fill="#000"/><rect x="766.10" y="219" width="1" height="2" fill="#000"/><rect x="771.40" y="219" width="1" height="2" fill="#000"/><rect x="776.70" y="219" width="1" height="2" fill="#000"/><rect x="782.00" y="219" width="1" height="3" fill="#000"/><rect x="787.30" y="219" width="1" height="2" fill="#000"/><rect x="792.60" y="219" width="1" height="2" fill="#000"/><rect x="797.90" y="219" width="1" height="2" fill="#000"/><rect x="803.20" y="219" width="1" height="2" fill="#000"/><rect x="808.50" y="219" width="1" height="5" fill="#000"/><rect x="813.80" y="219" width="1" height="2" fill="#000"/><rect x="819.10" y="219" width="1" height="2" fill="#000"/><rect x="824.40" y="219" width="1" height="2" fill="#000"/><rect x="829.70" y="219" width="1" height="2" fill="#000"/><rect x="835.00" y="219" width="1" height="3" fill="#000"/><rect x="840.30" y="219" width="1" height="2" fill="#000"/><rect x="845.60" y="219" width="1" height="2" fill="#000"/><rect x="850.90" y="219" width="1" height="2" fill="#000"/><rect x="856.20" y="219" width="1" height="2" fill="#000"/><rect x="861.50" y="219" width="1" height="5" fill="#000"/><rect x="866.80" y="219" width="1" height="2" fill="#000"/><rect x="872.10" y="219" width="1" height="2" fill="#000"/><rect x="877.40" y="219" width="1" height="2" fill="#000"/><rect x="882.70" y="219" width="1" height="2" fill="#000"/><rect x="888.00" y="219" width="1" height="3" fill="#000"/><rect x="893.30" y="219" width="1" height="2" fill="#000"/><rect x="898.60" y="219" width="1" height="2" fill="#000"/><rect x="903.90" y="219" width="1" height="2" fill="#000"/><rect x="909.20" y="219" width="1" height="2" fill="#000"/><rect x="914.50" y="219" width="1" height="5" fill="#000"/><rect x="919.80" y="219" width="1" height="2" fill="#000"/><rect x="925.10" y="219" width="1" height="2" fill="#000"/><rect x="930.40" y="219" width="1" height="2" fill="#000"/><rect x="935.70" y="219" width="1" height="2" fill="#000"/><rect x="941.00" y="219" width="1" height="3" fill="#000"/><rect x="946.30" y="219" width="1" height="2" fill="#000"/><rect x="951.60" y="219" width="1" height="2" fill="#000"/><rect x="956.90" y="219" width="1" height="2" fill="#000"/><rect x="962.20" y="219" width="1" height="2" fill="#000"/><rect x="967.50" y="219" width="1" height="5" fill="#000"/><rect x="972.80" y="219" width="1" height="2" fill="#000"/><rect x="978.10" y="219" width="1" height="2" fill="#000"/><rect x="983.40" y="219" width="1" height="2" fill="#000"/><rect x="988.70" y="219" width="1" height="2" fill="#000"/><rect x="994.00" y="219" width="1" height="3" fill="#000"/><rect x="999.30" y="219" width="1" height="2" fill="#000"/><rect x="226" y="223.80" width="2" height="1" fill="#000"/><rect x="226" y="229.10" width="2" height="1" fill="#000"/><rect x="226" y="234.40" width="2" height="1" fill="#000"/><rect x="226" y="239.70" width="2" height="1" fill="#000"/><rect x="226" y="245.00" width="3" height="1" fill="#000"/><rect x="226" y="250.30" width="2" height="1" fill="#000"/><rect x="226" y="255.60" width="2" height="1" fill="#000"/><rect x="226" y="260.90" width="2" height="1" fill="#000"/><rect x="226" y="266.20" width="2" height="1" fill="#000"/><rect x="226" y="271.50" width="5" height="1" fill="#000"/><rect x="226" y="276.80" width="2" height="1" fill="#000"/><rect x="226" y="282.10" width="2" height="1" fill="#000"/><rect x="226" y="287.40" width="2" height="1" fill="#000"/><rect x="226" y="292.70" width="2" height="1" fill="#000"/><rect x="226" y="298.00" width="3" height="1" fill="#000"/><rect x="226" y="303.30" width="2" height="1" fill="#000"/><rect x="226" y="308.60" width="2" height="1" fill="#000"/><rect x="226" y="313.90" width="2" height="1" fill="#000"/><rect x="226" y="319.20" width="2" height="1" fill="#000"/><rect x="226" y="324.50" width="5" height="1" fill="#000"/><rect x="226" y="329.80" width="2" height="1" fill="#000"/><rect x="226" y="335.10" width="2" height="1" fill="#000"/><rect x="226" y="340.40" width="2" height="1" fill="#000"/><rect x="226" y="345.70" width="2" height="1" fill="#000"/><rect x="226" y="351.00" width="3" height="1" fill="#000"/><rect x="226" y="356.30" width="2" height="1" fill="#000"/><rect x="226" y="361.60" width="2" height="1" fill="#000"/><rect x="226" y="366.90" width="2" height="1" fill="#000"/><rect x="226" y="372.20" width="2" height="1" fill="#000"/><rect x="226" y="377.50" width="5" height="1" fill="#000"/><rect x="226" y="382.80" width="2" height="1" fill="#000"/><rect x="226" y="388.10" width="2" height="1" fill="#000"/><rect x="226" y="393.40" width="2" height="1" fill="#000"/><rect x="226" y="398.70" width="2" height="1" fill="#000"/><rect x="226" y="404.00" width="3" height="1" fill="#000"/><rect x="226" y="409.30" width="2" height="1" fill="#000"/><rect x="226" y="414.60" width="2" height="1" fill="#000"/><rect x="226" y="419.90" width="2" height="1" fill="#000"/><rect x="226" y="425.20" width="2" height="1" fill="#000"/><rect x="226" y="430.50" width="5" height="1" fill="#000"/><rect x="226" y="435.80" width="2" height="1" fill="#000"/><rect x="226" y="441.10" width="2" height="1" fill="#000"/><rect x="226" y="446.40" width="2" height="1" fill="#000"/><rect x="226" y="451.70" width="2" height="1" fill="#000"/><rect x="226" y="457.00" width="3" height="1" fill="#000"/><rect x="226" y="462.30" width="2" height="1" fill="#000"/><rect x="226" y="467.60" width="2" height="1" fill="#000"/><rect x="226" y="472.90" width="2" height="1" fill="#000"/><rect x="226" y="478.20" width="2" height="1" fill="#000"/><rect x="226" y="483.50" width="5" height="1" fill="#000"/><rect x="226" y="488.80" width="2" height="1" fill="#000"/><rect x="226" y="494.10" width="2" height="1" fill="#000"/><rect x="226" y="499.40" width="2" height="1" fill="#000"/><rect x="226" y="504.70" width="2" height="1" fill="#000"/><rect x="226" y="510.00" width="3" height="1" fill="#000"/><rect x="226" y="515.30" width="2" height="1" fill="#000"/><rect x="226" y="520.60" width="2" height="1" fill="#000"/><rect x="226" y="525.90" width="2" height="1" fill="#000"/><rect x="226" y="531.20" width="2" height="1" fill="#000"/><rect x="226" y="536.50" width="5" height="1" fill="#000"/><rect x="226" y="541.80" width="2" height="1" fill="#000"/><rect x="226" y="547.10" width="2" height="1" fill="#000"/><rect x="226" y="552.40" width="2" height="1" fill="#000"/><rect x="226" y="557.70" width="2" height="1" fill="#000"/><rect x="226" y="563.00" width="3" height="1" fill="#000"/><rect x="226" y="568.30" width="2" height="1" fill="#000"/><rect x="226" y="573.60" width="2" height="1" fill="#000"/><rect x="226" y="578.90" width="2" height="1" fill="#000"/><rect x="226" y="584.20" width="2" height="1" fill="#000"/><rect x="226" y="589.50" width="5" height="1" fill="#000"/><rect x="226" y="594.80" width="2" height="1" fill="#000"/><rect x="226" y="600.10" width="2" height="1" fill="#000"/><rect x="226" y="605.40" width="2" height="1" fill="#000"/><rect x="226" y="610.70" width="2" height="1" fill="#000"/><rect x="226" y="616.00" width="3" height="1" fill="#000"/><rect x="226" y="621.30" width="2" height="1" fill="#000"/><rect x="226" y="626.60" width="2" height="1" fill="#000"/><rect x="226" y="631.90" width="2" height="1" fill="#000"/><rect x="226" y="637.20" width="2" height="1" fill="#000"/><rect x="226" y="642.50" width="5" height="1" fill="#000"/><rect x="226" y="647.80" width="2" height="1" fill="#000"/><rect x="226" y="653.10" width="2" height="1" fill="#000"/><rect x="226" y="658.40" width="2" height="1" fill="#000"/><rect x="226" y="663.70" width="2" height="1" fill="#000"/><rect x="226" y="669.00" width="3" height="1" fill="#000"/><rect x="226" y="674.30" width="2" height="1" fill="#000"/><rect x="226" y="679.60" width="2" height="1" fill="#000"/><rect x="226" y="684.90" width="2" height="1" fill="#000"/><rect x="226" y="690.20" width="2" height="1" fill="#000"/><rect x="226" y="695.50" width="5" height="1" fill="#000"/><rect x="226" y="700.80" width="2" height="1" fill="#000"/><rect x="226" y="706.10" width="2" height="1" fill="#000"/><rect x="226" y="711.40" width="2" height="1" fill="#000"/><rect x="226" y="716.70" width="2" height="1" fill="#000"/><rect x="226" y="722.00" width="3" height="1" fill="#000"/><rect x="226" y="727.30" width="2" height="1" fill="#000"/><rect x="226" y="732.60" width="2" height="1" fill="#000"/><rect x="226" y="737.90" width="2" height="1" fill="#000"/><rect x="226" y="743.20" width="2" height="1" fill="#000"/><rect x="226" y="748.50" width="5" height="1" fill="#000"/><rect x="226" y="753.80" width="2" height="1" fill="#000"/><rect x="226" y="759.10" width="2" height="1" fill="#000"/><rect x="226" y="764.40" width="2" height="1" fill="#000"/><rect x="731.5" y="190.5" width="276" height="166" fill="#fff" fill-opacity="0.85" stroke="#ccc" stroke-width="1"/><rect x="757" y="221" width="11" height="11" fill="#80e838"/><text x="773.5" y="230" font-family="Liberation Sans" font-size="11" fill="#222">0</text><rect x="757" y="234" width="11" height="11" fill="#84e838"/><text x="773.5" y="243" font-family="Liberation Sans" font-size="11" fill="#222">470800</text><rect x="757" y="247" width="11" height="11" fill="#98ea38"/><text x="773.5" y="256" font-family="Liberation Sans" font-size="11" fill="#222">941600</text><rect x="757" y="260" width="11" height="11" fill="#b8ea40"/><text x="773.5" y="269" font-family="Liberation Sans" font-size="11" fill="#222">1412400</text><rect x="757" y="273" width="11" height="11" fill="#d8ec40"/><text x="773.5" y="282" font-family="Liberation Sans" font-size="11" fill="#222">1883200</text><rect x="757" y="286" width="11" height="11" fill="#fcf040"/><text x="773.5" y="295" font-family="Liberation Sans" font-size="11" fill="#222">2354000</text><rect x="757" y="299" width="11" height="11" fill="#f8c848"/><text x="773.5" y="308" font-family="Liberation Sans" font-size="11" fill="#222">2824800</text><rect x="757" y="312" width="11" height="11" fill="#ec9a40"/><text x="773.5" y="321" font-family="Liberation Sans" font-size="11" fill="#222">3295600</text><rect x="757" y="325" width="11" height="11" fill="#e87040"/><text x="773.5" y="334" font-family="Liberation Sans" font-size="11" fill="#222">3766400</text><rect x="757" y="338" width="11" height="11" fill="#d84a38"/><text x="773.5" y="347" font-family="Liberation Sans" font-size="11" fill="#222">4237200</text><text x="757.7" y="208" font-family="Liberation Sans" font-size="13" font-weight="bold" fill="#222">Нагрузка на сетевое оборудование</text></svg>
<div class="a" style="left:0;top:765px;width:2px;height:3px;background:#000"></div>
</body></html>
